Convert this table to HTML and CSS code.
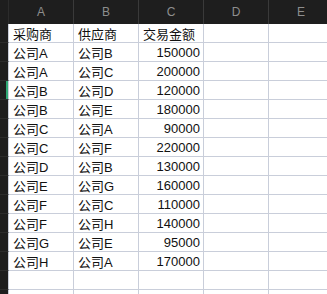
FILE: index.html
```html
<!DOCTYPE html>
<html>
<head>
<meta charset="utf-8">
<link rel="stylesheet" href="styles.css">
</head>
<body>
<div class="sheet">
  <div class="ch corner"></div>
  <div class="ch">A</div><div class="ch">B</div><div class="ch">C</div><div class="ch">D</div><div class="ch">E</div>

  <div class="rh"></div><div class="c">采购商</div><div class="c">供应商</div><div class="c">交易金额</div><div class="c"></div><div class="c"></div>
  <div class="rh"></div><div class="c">公司A</div><div class="c">公司B</div><div class="c n">150000</div><div class="c"></div><div class="c"></div>
  <div class="rh"></div><div class="c">公司A</div><div class="c">公司C</div><div class="c n">200000</div><div class="c"></div><div class="c"></div>
  <div class="rh active"></div><div class="c">公司B</div><div class="c">公司D</div><div class="c n">120000</div><div class="c"></div><div class="c"></div>
  <div class="rh"></div><div class="c">公司B</div><div class="c">公司E</div><div class="c n">180000</div><div class="c"></div><div class="c"></div>
  <div class="rh"></div><div class="c">公司C</div><div class="c">公司A</div><div class="c n">90000</div><div class="c"></div><div class="c"></div>
  <div class="rh"></div><div class="c">公司C</div><div class="c">公司F</div><div class="c n">220000</div><div class="c"></div><div class="c"></div>
  <div class="rh"></div><div class="c">公司D</div><div class="c">公司B</div><div class="c n">130000</div><div class="c"></div><div class="c"></div>
  <div class="rh"></div><div class="c">公司E</div><div class="c">公司G</div><div class="c n">160000</div><div class="c"></div><div class="c"></div>
  <div class="rh"></div><div class="c">公司F</div><div class="c">公司C</div><div class="c n">110000</div><div class="c"></div><div class="c"></div>
  <div class="rh"></div><div class="c">公司F</div><div class="c">公司H</div><div class="c n">140000</div><div class="c"></div><div class="c"></div>
  <div class="rh"></div><div class="c">公司G</div><div class="c">公司E</div><div class="c n">95000</div><div class="c"></div><div class="c"></div>
  <div class="rh"></div><div class="c">公司H</div><div class="c">公司A</div><div class="c n">170000</div><div class="c"></div><div class="c"></div>
  <div class="rh"></div><div class="c"></div><div class="c"></div><div class="c"></div><div class="c"></div><div class="c"></div>
  <div class="rh"></div><div class="c"></div><div class="c"></div><div class="c"></div><div class="c"></div><div class="c"></div>
</div>
</body>
</html>
```
FILE: styles.css
```css
html, body {
  margin: 0;
  padding: 0;
  background: #ffffff;
  overflow: hidden;
}
.sheet {
  display: grid;
  grid-template-columns: 9px 65px 65px 65px 65px 65px;
  grid-template-rows: 24px;
  grid-auto-rows: 19px;
  height: 294px;
  overflow: hidden;
  font-family: "Liberation Sans", "Noto Sans CJK SC", sans-serif;
  font-size: 13px;
  color: #111111;
}
.ch {
  box-sizing: border-box;
  background: #1e1e1e;
  color: #8e8e8e;
  font-size: 12px;
  display: flex;
  align-items: center;
  justify-content: center;
  border-right: 1px solid #3a3a3a;
}
.ch.corner {
  border-right: 1px solid #2c2c2c;
}
.rh {
  box-sizing: border-box;
  background: #1e1e1e;
  border-right: 1px solid #c9ceda;
  border-bottom: 1px solid #2c2c2c;
}
.rh.active {
  background: linear-gradient(to right, #1e1e1e 6px, #2fa774 6px);
}
.c {
  box-sizing: border-box;
  border-right: 1px solid #c9ceda;
  border-bottom: 1px solid #c9ceda;
  padding: 0 3px 0 4px;
  display: flex;
  align-items: center;
  white-space: nowrap;
  overflow: hidden;
}
.c.n {
  justify-content: flex-end;
}
```
